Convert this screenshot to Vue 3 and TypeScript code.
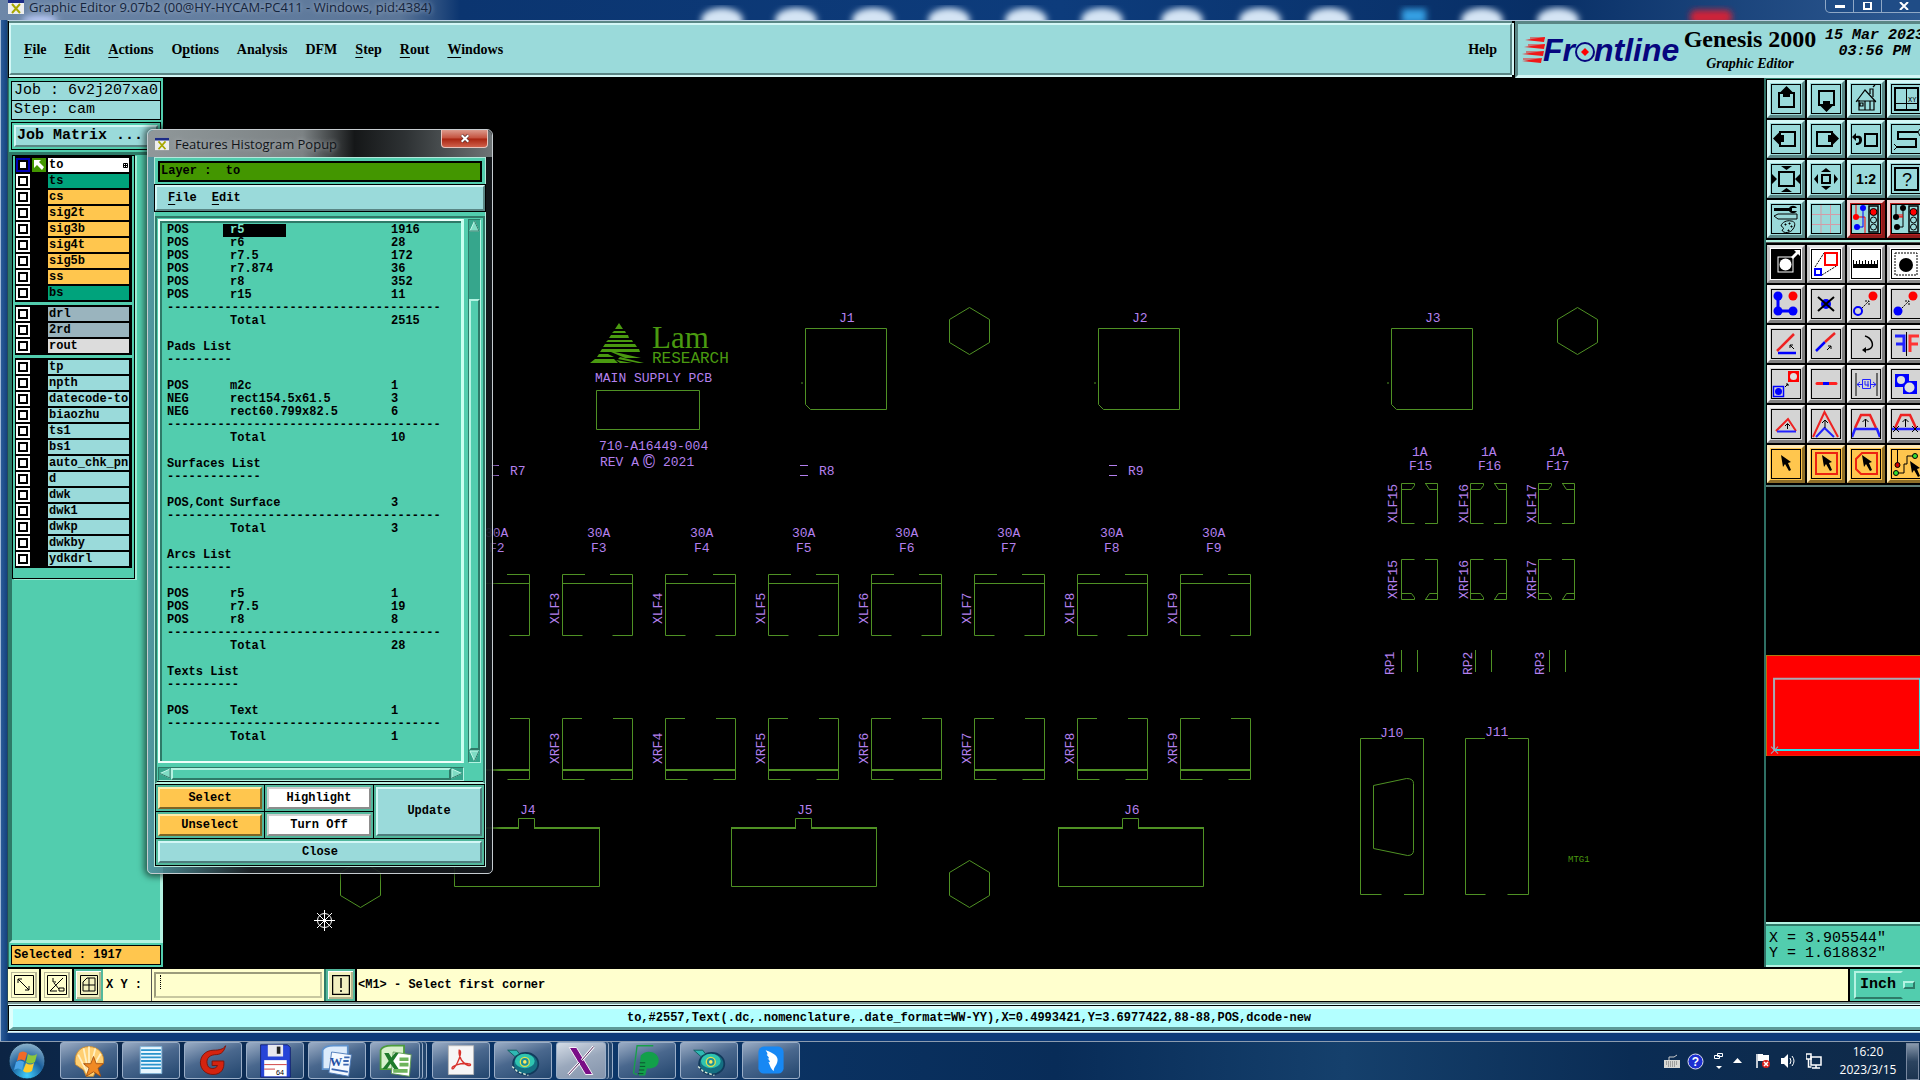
<script setup lang="ts">
import { ref } from 'vue'

interface MenuEntry { pre: string; key: string; post: string }
interface Layer { name: string; tone: string; active?: boolean }
interface Tool { label: string; tone: string; art: string }
interface Row { kind: 'data' | 'rule' | 'title' | 'blank'; a?: string; b?: string; c?: string; picked?: boolean }

const menus: MenuEntry[] = [
  { pre: '', key: 'F', post: 'ile' },
  { pre: '', key: 'E', post: 'dit' },
  { pre: '', key: 'A', post: 'ctions' },
  { pre: 'O', key: 'p', post: 'tions' },
  { pre: 'Analysis', key: '', post: '' },
  { pre: 'DFM', key: '', post: '' },
  { pre: '', key: 'S', post: 'tep' },
  { pre: '', key: 'R', post: 'out' },
  { pre: '', key: 'W', post: 'indows' },
]

const layerGroups: Layer[][] = [
  [
    { name: 'to', tone: 'white', active: true },
    { name: 'ts', tone: 'green' },
    { name: 'cs', tone: 'orange' },
    { name: 'sig2t', tone: 'orange' },
    { name: 'sig3b', tone: 'orange' },
    { name: 'sig4t', tone: 'orange' },
    { name: 'sig5b', tone: 'orange' },
    { name: 'ss', tone: 'orange' },
    { name: 'bs', tone: 'green' },
  ],
  [
    { name: 'drl', tone: 'slate' },
    { name: '2rd', tone: 'slate' },
    { name: 'rout', tone: 'silver' },
  ],
  ['tp', 'npth', 'datecode-to', 'biaozhu', 'ts1', 'bs1', 'auto_chk_pnl', 'd', 'dwk', 'dwk1', 'dwkp', 'dwkby', 'ydkdrl']
    .map((name) => ({ name, tone: 'aqua' })),
]

const d = (a: string, b: string, c: string, picked = false): Row => ({ kind: 'data', a, b, c, picked })
const rule = (n = 38): Row => ({ kind: 'rule', a: '-'.repeat(n) })
const title = (a: string): Row => ({ kind: 'title', a })
const blank: Row = { kind: 'blank' }

const rows: Row[] = [
  d('POS', 'r5', '1916', true), d('POS', 'r6', '28'), d('POS', 'r7.5', '172'), d('POS', 'r7.874', '36'),
  d('POS', 'r8', '352'), d('POS', 'r15', '11'), rule(), d('', 'Total', '2515'), blank,
  title('Pads List'), rule(9), blank,
  d('POS', 'm2c', '1'), d('NEG', 'rect154.5x61.5', '3'), d('NEG', 'rect60.799x82.5', '6'), rule(), d('', 'Total', '10'), blank,
  title('Surfaces List'), rule(13), blank,
  d('POS,Cont', 'Surface', '3'), rule(), d('', 'Total', '3'), blank,
  title('Arcs List'), rule(9), blank,
  d('POS', 'r5', '1'), d('POS', 'r7.5', '19'), d('POS', 'r8', '8'), rule(), d('', 'Total', '28'), blank,
  title('Texts List'), rule(10), blank,
  d('POS', 'Text', '1'), rule(), d('', 'Total', '1'),
]

const sq = (x: number, y: number, w: number, h: number, extra = '') =>
  `<rect x="${x}" y="${y}" width="${w}" height="${h}" fill="none" stroke="#000" stroke-width="2" ${extra}/>`
const arrow = (x: number, y: number) =>
  `<path d="M${x} ${y}l7 -7m-4 0h4v4" fill="none" stroke="#000" stroke-dasharray="2 1"/>`
const up = (x: number, y: number) =>
  `<path d="M${x} ${y + 8}v-8M${x - 3} ${y + 3}l3 -3l3 3" fill="none" stroke="#000"/>`
const cursor = (x: number, y: number) =>
  `<path transform="translate(${x} ${y})" d="M0 0L10 7L7 8L10 15L8 16L4 9L2 12Z"/>`
const lamp = '<rect x="18" y="2" width="9" height="26" fill="none" stroke="#000" stroke-width="1.5"/><circle cx="22.5" cy="8" r="3.5" fill="#f00" stroke="#000"/><circle cx="22.5" cy="16" r="3" fill="none" stroke="#000"/><circle cx="22.5" cy="23" r="3" fill="none" stroke="#000"/>'

const viewTools: Tool[] = [
  { label: 'Pan up', tone: 'aqua', art: sq(8, 9, 15, 14) + '<path d="M15.500 2l6 6h-2.500v5h-7v-5h-2.500z"/>' },
  { label: 'Pan down', tone: 'aqua', art: sq(8, 7, 15, 14) + '<path d="M15.500 28l6 -6h-2.500v-5h-7v5h-2.500z"/>' },
  { label: 'Home', tone: 'aqua', art: '<path d="M5 18L14 6L25 18M8 16v10h15v-10M5 17h20M14 26v-9h5v9M9 19h3v3h-3zM19 10v-5h3v8M22 3l2 -2" fill="none" stroke="#000" stroke-width="1.200"/>' },
  { label: 'Zoom XY', tone: 'aqua', art: sq(4, 4, 23, 22) + '<path d="M15.500 4v22M4 19.500h23" stroke="#000"/><text x="17" y="18" font-size="7" font-family="Liberation Mono, monospace">XY</text>' },
  { label: 'Pan left', tone: 'aqua', art: sq(9, 8, 15, 14) + '<path d="M2 14.500l6 -6v2.500h5v7h-5v2.500z"/>' },
  { label: 'Pan right', tone: 'aqua', art: sq(6, 8, 15, 14) + '<path d="M28 14.500l-6 -6v2.500h-5v7h5v2.500z"/>' },
  { label: 'Previous view', tone: 'aqua', art: sq(14, 10, 12, 12) + '<path d="M5 12c5 -1 6 1 6 4s-2 5 -6 5v-2c3 0 3 -1 3 -3s-1 -2 -3 -2v3l-4 -4l4 -4z"/>' },
  { label: 'Snake path', tone: 'aqua', art: '<path d="M27 8H7v7h18v8H6" fill="none" stroke="#000" stroke-width="2"/><path d="M27 8l2 -3M27 8l2 4M6 23l-3 -3M6 23l-3 3" stroke="#000"/>' },
  { label: 'Zoom in', tone: 'aqua', art: sq(8, 8, 15, 14) + '<path d="M10 2h11l-5.500 4zM10 28h11l-5.500 -4zM1 10v10l5 -5zM29 10v10l-5 -5z"/>' },
  { label: 'Zoom out', tone: 'aqua', art: sq(11, 11, 8, 8) + '<path d="M10 8h10l-5 -4zM10 22h10l-5 4zM7 10v10l-4 -5zM23 10v10l4 -5z"/>' },
  { label: 'Zoom 1:2', tone: 'aqua', art: '<text x="15" y="20" text-anchor="middle" font-size="14" font-weight="bold" font-family="Liberation Sans, sans-serif">1:2</text>' },
  { label: 'Query', tone: 'aqua', art: sq(4, 4, 23, 22) + '<text x="16" y="22" text-anchor="middle" font-size="18" font-family="Liberation Sans, sans-serif">?</text>' },
  { label: 'Display options', tone: 'aqua', art: '<path d="M3 4h15c2 -3 6 -3 8 0h-5v3h5c-2 3 -6 3 -8 0h-15z"/><path d="M3 12l4 -2h19v5h-19zM10 22c1 -4 6 -6 10 -5c4 0 5 4 2 8c-2 4 -10 5 -11 1c3 -1 1 -3 -1 -4z" fill="none" stroke="#000"/><path d="M14 20h1v1h-1zM18 19h1v1h-1zM20 22h1v1h-1zM17 26h1v1h-1z" stroke="#000"/>' },
  { label: 'Grid', tone: 'aqua', art: '<path d="M10 1v28M19.500 1v28M1 10.500h28M1 20.500h28" stroke="#d49ba6"/>' },
  { label: 'Net compare', tone: 'red', art: '<path d="M5 1v12h9v16" fill="none" stroke="#f00" /><circle cx="5" cy="13" r="3" fill="#f00"/><path d="M12 4v19h-5" fill="none" stroke="#00f"/><circle cx="12" cy="4" r="3" fill="#00f"/><circle cx="6" cy="23" r="3" fill="#00f"/>' + lamp },
  { label: 'Net check', tone: 'red', art: '<path d="M5 1v12M12 4v19h-5" fill="none" stroke="#000"/><path d="M6 13h6M7 10v3M9 10v3M11 10v3" stroke="#f00"/><circle cx="5" cy="13" r="3"/><circle cx="12" cy="4" r="3"/><circle cx="6" cy="23" r="3"/>' + lamp },
]

const editTools: Tool[] = [
  { label: 'Select inside', tone: 'white', art: '<path d="M1 1h28v28H1z"/><rect x="7" y="8" width="15" height="15" fill="none" stroke="#fff"/><circle cx="14.500" cy="15.500" r="6" fill="#fff"/><path d="M20 8l5 -5l-2 -2h6v6l-2 -2l-5 5z" fill="#fff"/>' },
  { label: 'Resize', tone: 'white', art: '<path d="M4 18L13 4M11 26L27 16" stroke="#000" stroke-dasharray="2 1"/><rect x="14" y="4" width="12" height="12" fill="none" stroke="#f00" stroke-width="2"/><rect x="4" y="20" width="6" height="6" fill="none" stroke="#00f" stroke-width="2"/>' },
  { label: 'Measure', tone: 'white', art: '<path d="M2 19v-8h1v4h2v-3h1v3h2v-4h1v4h2v-3h1v3h2v-4h1v4h2v-3h1v3h2v-4h1v4h2v-3h1v3h2v-4h1v8z"/>' },
  { label: 'Select pad', tone: 'white', art: '<rect x="4" y="4" width="22" height="22" fill="none" stroke="#000" stroke-dasharray="2 1"/><circle cx="15" cy="16" r="7"/>' },
  { label: 'Copy', tone: 'gray', art: '<path d="M7 7v15h15" fill="none" stroke="#00f" stroke-width="3"/><circle cx="7" cy="7" r="4.500" fill="#00f"/><circle cx="7" cy="22" r="4.500" fill="#00f"/><circle cx="22" cy="22" r="4.500" fill="#00f"/><circle cx="22" cy="7" r="4.500" fill="#f00"/>' },
  { label: 'Delete', tone: 'gray', art: '<circle cx="15" cy="15" r="5" fill="#00f"/><path d="M7 8L23 22M23 8L7 22" stroke="#000" stroke-width="2"/>' },
  { label: 'Move', tone: 'gray', art: '<circle cx="7" cy="22" r="4" fill="none" stroke="#00f" stroke-width="2"/><circle cx="22" cy="7" r="4.500" fill="#f00"/>' + arrow(11, 19) },
  { label: 'Duplicate', tone: 'gray', art: '<circle cx="7" cy="22" r="4.500" fill="#00f"/><circle cx="22" cy="7" r="4.500" fill="#f00"/>' + arrow(11, 19) },
  { label: 'Rotate', tone: 'gray', art: '<path d="M6 22L23 5" stroke="#e22" stroke-width="2.500"/><path d="M7 24h18" stroke="#00f" stroke-width="2.500"/><path d="M23 20l-4 -4m0 3v-3h3" fill="none" stroke="#000"/>' },
  { label: 'Extend line', tone: 'gray', art: '<path d="M5 22L14 13" stroke="#00f" stroke-width="2.500"/><path d="M14 13L24 4" stroke="#e22" stroke-width="2.500"/><path d="M16 21l4 -4m-3 0h3v3" fill="none" stroke="#000"/>' },
  { label: 'Undo', tone: 'gray', art: '<path d="M14 7c7 2 9 9 6 12c-2 2 -4 2 -7 2" fill="none" stroke="#000" stroke-width="1.500"/><path d="M11 21l4 -3v6z"/>' },
  { label: 'Mirror', tone: 'gray', art: '<path d="M4 7h9v16M5 15h8" fill="none" stroke="#22f" stroke-width="3"/><path d="M15.500 3v24" stroke="#000"/><path d="M28 7h-9v16M27 15h-8" fill="none" stroke="#f33" stroke-width="3"/>' },
  { label: 'Change symbol', tone: 'gray', art: '<rect x="17" y="2" width="11" height="11" fill="#f00"/><circle cx="22.500" cy="7.500" r="3.500" fill="#ddd"/><rect x="2.500" y="17.500" width="10" height="10" fill="none" stroke="#00f" stroke-width="1.500"/><circle cx="7.500" cy="22.500" r="3.500" fill="#00f"/><path d="M14 18l3 -3m-2 0h2v2" fill="none" stroke="#000"/>' },
  { label: 'Break line', tone: 'gray', art: '<path d="M6 14.500h19" stroke="#f22" stroke-width="3" stroke-linecap="round"/><path d="M12 14.500h6" stroke="#00f" stroke-width="3"/>' },
  { label: 'Stretch', tone: 'gray', art: '<path d="M5 4v23M26 4v23" stroke="#000"/><path d="M6 15.500h5M6 15.500l3 -2.500M6 15.500l3 2.500M25 15.500h-5M25 15.500l-3 -2.500M25 15.500l-3 2.500M11.500 10.500h8v9h-8zM14 12v4h4M17 12v6" fill="none" stroke="#22f"/>' },
  { label: 'Merge', tone: 'gray', art: '<path d="M4 5h14v7h8v13H12v-7H4z" fill="#00f"/><circle cx="10" cy="11" r="4" fill="#ddd"/><circle cx="18.500" cy="18.500" r="5" fill="#ddd"/>' },
  { label: 'Corner', tone: 'gray', art: '<path d="M5 22L17 10L25 22" fill="none" stroke="#e22" stroke-width="2"/><path d="M6 22.500h19" stroke="#22f" stroke-width="2"/><path d="M16.500 20v-5M14 17l2.500 -2.500l2.500 2.500" fill="none" stroke="#000"/>' },
  { label: 'Peak', tone: 'gray', art: '<path d="M2 28L13.500 3L27 28" fill="none" stroke="#e22" stroke-width="2"/><path d="M5 28L13.500 19L23 28" fill="none" stroke="#22f" stroke-width="2"/>' + up(14, 11) },
  { label: 'Raise segment', tone: 'gray', art: '<path d="M4 19L10 6h9l6 13" fill="none" stroke="#e22" stroke-width="2.500"/><path d="M1 28L4 20h22l3 8" fill="none" stroke="#22f" stroke-width="2.500"/>' + up(14.5, 10) },
  { label: 'Cut segment', tone: 'gray', art: '<path d="M4 19L10 6h9l6 13" fill="none" stroke="#e22" stroke-width="2.500"/><path d="M1 20h28" stroke="#22f" stroke-width="2.500"/><path d="M2 17l6 6M8 17l-6 6M21 17l6 6M27 17l-6 6" stroke="#000"/>' + up(14.5, 10) },
  { label: 'Pick feature', tone: 'orange', art: cursor(10, 6) },
  { label: 'Pick by window', tone: 'orange', art: '<rect x="5" y="4" width="21" height="21" fill="none" stroke="#e21" stroke-width="2"/>' + cursor(11, 6) },
  { label: 'Pick by polygon', tone: 'orange', art: '<path d="M11 4h15v21H10l-5 -5v-10z" fill="none" stroke="#e21" stroke-width="2"/>' + cursor(11, 6) },
  { label: 'Pick net', tone: 'orange', art: '<path d="M6.500 1v15M5 24h8v-9h3v-8h8" fill="none" stroke="#000"/><circle cx="6.500" cy="16" r="2.500" fill="#c00" stroke="#000"/><circle cx="5" cy="24" r="2.500" fill="#3d3" stroke="#000"/><circle cx="24" cy="7" r="2.500" fill="#3d3" stroke="#000"/>' + cursor(19, 12) },
]

const blobs = [722, 796, 873, 949, 1026, 1102, 1182, 1260, 1329, 1482, 1558]

const fuses = [2, 3, 4, 5, 6, 7, 8, 9].map((n) => ({
  n,
  x: 562 + (n - 3) * 103,
  tx: Math.round(587 + (n - 3) * 102.5),
}))
const smallFuses = [
  { n: 15, x: 1401, lx: 1397 },
  { n: 16, x: 1470, lx: 1468 },
  { n: 17, x: 1538, lx: 1536 },
]
const sockets = [{ n: 1, x: 805 }, { n: 2, x: 1098 }, { n: 3, x: 1391 }]
const headers = [{ n: 4, x: 454 }, { n: 5, x: 731 }, { n: 6, x: 1058 }]
const hexes = [{ x: 969, y: 331 }, { x: 1577, y: 331 }, { x: 969, y: 884 }, { x: 360, y: 884 }]
const resistors = [{ n: 7, x: 491 }, { n: 8, x: 800 }, { n: 9, x: 1109 }]
const packs = [{ n: 1, x: 1401, lx: 1394 }, { n: 2, x: 1475, lx: 1472 }, { n: 3, x: 1549, lx: 1544 }]

const shell = '<path d="M20 4C8 4 3 14 5 24l9 6l3 7h8l3 -8l8 -6C38 12 30 4 20 4z" fill="#ffcf72" stroke="#c98a2e"/><path d="M18 33L8 13M19 31L14 6M20 31V4M21 31L27 6M22 31L33 12" stroke="#fff0c4" stroke-width="2"/><path d="M25 15l3 8l8 0l-6 5l3 9l-8 -5l-8 5l3 -9l-6 -5l8 0z" fill="#f08a24" stroke="#a4500e"/>'
const page = '<path d="M8 4h24v30H8z" fill="#e8f7ff" stroke="#7fb4d8"/><path d="M9 8h22M9 12h22M9 16h22M9 20h22M9 24h22M9 28h22" stroke="#2a94cc" stroke-width="2"/>'
const gee = '<path d="M34 3c-2 4 -8 5 -13 5C11 8 6 15 6 22s6 13 14 13c9 0 13 -6 12 -15H19v5h6c-1 4 -9 5 -11 0c-2 -6 0 -11 8 -12c6 0 10 -2 12 -10z" fill="#d5230f" stroke="#7d1208"/>'
const floppy = '<path d="M4 2h30l3 3v33H4z" fill="#2745d8" stroke="#12206e"/><path d="M12 2h17v13H12z" fill="#e8e8ee"/><path d="M22 4h4v8h-4z" fill="#222"/><path d="M8 19h25v18H8z" fill="#fff"/><path d="M8 24h25M8 29h12" stroke="#c33" /><text x="21" y="35" font-size="8" font-family="Liberation Sans, sans-serif">64</text>'
const word = '<path d="M4 8C6 4 12 3 16 3h16v26H4z" fill="#dcebfb" stroke="#5f92cc" stroke-width="2"/><path d="M14 10l22 3l-3 24l-22 -4z" fill="#f4f9ff" stroke="#4a78b8"/><path d="M28 16h6M27 20h6M27 24h6M14 29l18 3" stroke="#3a66b0" stroke-width="2"/><text x="12" y="25" font-size="14" font-weight="bold" fill="#2450a4" font-family="Liberation Serif, serif">W</text>'
const excel = '<path d="M4 8C6 4 12 3 16 3h14v26H4z" fill="#d7f0cc" stroke="#4c9c3c" stroke-width="2"/><path d="M18 10l20 3l-2 24l-20 -3z" fill="#fff" stroke="#5a9a4e"/><path d="M25 16h10v4h-10zM25 22h10v4h-10zM18 29h16v4h-16z" fill="#6db45c"/><path d="M8 11h5l3 5l4 -5h4l-6 9l6 9h-5l-4 -6l-4 6H6l7 -9z" fill="#1f7a2c"/>'
const pdf = '<path d="M6 3h28v32H6z" fill="#f6f6f6" stroke="#b8b8b8"/><path d="M18 8c3 0 1 8 -2 14s-6 8 -6 6s8 -6 18 -5c4 0 3 3 0 2c-6 -2 -11 -9 -10 -17z" fill="none" stroke="#d8322c" stroke-width="1.500"/>'
const gerber = '<ellipse cx="23" cy="23" rx="14" ry="12" fill="#156f82" stroke="#123b5c" stroke-width="2"/><ellipse cx="22" cy="20" rx="11" ry="8" fill="#2fc4b0"/><circle cx="22" cy="21" r="5" fill="#1a8f9c" stroke="#e4e04a" stroke-width="1.500"/><circle cx="22" cy="21" r="2" fill="#ffe960"/><path d="M3 8h10l3 4l-5 3z" fill="#2fb8b4" stroke="#0f5a5c"/><path d="M8 26l6 6l12 4" fill="none" stroke="#ded" stroke-width="1.500" stroke-dasharray="3 2"/>'
const xwin = '<path d="M7 5h8l18 30h-8z" fill="#7a0e86" stroke="#fff" stroke-width="1"/><path d="M34 4L21 19M18 22L6 35" stroke="#fff" stroke-width="3"/><path d="M34 4L21 19M18 22L6 35" stroke="#3c0b46" stroke-width="1"/>'
const pee = '<path d="M5 34L9 3h18M6 34l3 1" fill="none" stroke="#18a04a" stroke-width="1.500"/><path d="M13 14c6 -8 20 -4 20 5c0 8 -7 10 -13 9l-2 8h-7z" fill="#12a04a"/><path d="M12 22h6M12 26h6M11 30h6M10 34h6" stroke="#0b4a2c"/>'
const bird = '<rect x="6" y="4" width="28" height="30" rx="6" fill="#1788f4"/><path d="M14 8c9 3 15 7 13 13c-1 4 -4 6 -4 10c-4 -3 -4 -7 -6 -10c3 1 2 -1 -1 -4c3 1 2 -1 -1 -4c2 0 1 -2 -1 -5z" fill="#fff"/>'

const apps = [
  { label: 'Shell viewer', art: shell },
  { label: 'Notepad', art: page },
  { label: 'Gee', art: gee },
  { label: 'Floppy commander', art: floppy },
  { label: 'Word', art: word },
  { label: 'Excel', art: excel, stacked: true },
  { label: 'PDF reader', art: pdf },
  { label: 'CAM viewer', art: gerber },
  { label: 'X server', art: xwin, stacked: true, active: true },
  { label: 'Planner', art: pee },
  { label: 'CAM editor', art: gerber },
  { label: 'Messenger', art: bird },
]

const coords = ref('')
const unit = ref('Inch')
</script>

<template>
  <div class="desktop">
    <div class="window">
      <header class="titlebar">
        <svg class="glow" width="100%" height="20" aria-hidden="true">
          <defs><filter id="soft"><feGaussianBlur stdDeviation="3" /></filter></defs>
          <g filter="url(#soft)">
            <ellipse v-for="x in blobs" :key="x" :cx="x" cy="20" rx="21" ry="12" fill="#d4e4f4" />
            <ellipse cx="40" cy="20" rx="18" ry="5" fill="#b8c8f4" />
            <rect x="1402" y="9" width="24" height="14" fill="#35a0e4" />
            <rect x="1690" y="10" width="42" height="14" rx="6" fill="#d02238" />
          </g>
        </svg>
        <svg class="xico" width="16" height="14" viewBox="0 0 16 14" aria-hidden="true">
          <path d="M0 0h16v14H0z" fill="#eee" /><path d="M0 0h16v3H0z" fill="#1c2c86" />
          <path d="M4 4l8 9M12 4l-8 9" stroke="#a8a800" stroke-width="2" />
        </svg>
        <span class="caption">Graphic Editor 9.07b2 (00@HY-HYCAM-PC411 - Windows, pid:4384)</span>
        <div class="winbtns">
          <button type="button" aria-label="Minimize"><i class="min"></i></button>
          <button type="button" aria-label="Maximize"><i class="max"></i></button>
          <button type="button" aria-label="Close window">
            <svg width="10" height="8" viewBox="0 0 10 8"><path d="M1 0l8 8M9 0l-8 8" stroke="#fff" stroke-width="2" /></svg>
          </button>
        </div>
      </header>

      <div class="body">
        <div class="top">
          <nav class="menubar">
            <button v-for="(m, i) in menus" :key="i" type="button">{{ m.pre }}<u v-if="m.key">{{ m.key }}</u>{{ m.post }}</button>
            <button type="button" class="help">Help</button>
          </nav>
          <div class="brand">
            <svg width="160" height="36" viewBox="0 0 160 36" role="img" aria-label="Frontline">
              <path d="M3 8l20 -3l-1 5zM2 15l21 -3l-1 5zM0 22l22 -3l-1 5zM0 29l20 -3l-1 5z" fill="#f01818" />
              <path d="M8 6h15M6 13h17M4 20h17M1 27h17" stroke="#f01818" stroke-width="1" />
              <g fill="#06067e" font-family="Liberation Sans, sans-serif" font-size="32" font-weight="bold" font-style="italic">
                <text x="21" y="29">Fr</text>
                <text x="72" y="29">ntline</text>
              </g>
              <circle cx="63" cy="20" r="9" fill="#9adada" stroke="#06067e" stroke-width="2" />
              <path d="M63 16l4 4l-4 4l-4 -4z" fill="#f00" />
            </svg>
            <div class="product"><b>Genesis 2000</b><em>Graphic Editor</em></div>
            <div class="clock">15 Mar 2023<br />03:56 PM</div>
          </div>
        </div>

        <main class="work">
          <aside class="side">
            <div class="jobinfo">
              <div>Job : 6v2j207xa0</div>
              <div>Step: cam</div>
            </div>
            <div class="matrixbox"><button type="button">Job Matrix ...</button></div>
            <div class="layers">
              <div class="layerframe">
                <ul v-for="(g, gi) in layerGroups" :key="gi">
                  <li v-for="l in g" :key="l.name">
                    <input :id="'ly-' + l.name" type="checkbox" :class="{ on: l.active }" />
                    <svg v-if="l.active" class="mark" width="14" height="14" viewBox="0 0 14 14" aria-hidden="true">
                      <path d="M0 0h14v14H0z" fill="#439600" /><path d="M2 2h7l-2 2l5 5l-2 3l-5 -5l-3 3z" fill="#fff" />
                    </svg>
                    <label :for="'ly-' + l.name" :class="l.tone">
                      {{ l.name }}
                      <svg v-if="l.active" width="5" height="5" viewBox="0 0 5 5" aria-hidden="true"><path d="M.5 .5h4v4h-4zM2.500 0v5M0 2.500h5" fill="none" stroke="#000" /></svg>
                    </label>
                  </li>
                </ul>
              </div>
            </div>
            <div class="selected"><div>Selected : 1917</div></div>
          </aside>

          <div class="canvas">
            <svg width="100%" height="100%" aria-label="Board silkscreen">
              <g transform="translate(-163 -78)">
                <g class="ln">
                  <path v-for="h in hexes" :key="h.x + '-' + h.y" :d="`M${h.x + .5} ${h.y - 23.5}l20 12v23l-20 12l-20 -12v-23z`" />
                  <path v-for="s in sockets" :key="s.n" :d="`M${s.x + .5} 328.500h81v81h-76l-5 -5zM${s.x - 4} 383h2`" />
                  <path d="M596.500 390.500h103v39h-103z" />
                  <path
                    v-for="f in fuses" :key="f.n"
                    :d="`M${f.x + 23} 574.500h-22.500v61h20M${f.x + 48} 574.500h22.500v61h-20M${f.x} 583.500h70
                         M${f.x + 20} 718.500h-19.500v61h22M${f.x + 51} 718.500h19.500v61h-22`"
                  />
                  <path v-for="f in fuses" :key="'t' + f.n" class="bold" :d="`M${f.x} 770h71`" />
                  <path
                    v-for="j in headers" :key="j.n"
                    :d="`M${j.x + .5} 828v58.500h145v-58.500M${j.x + 64.5} 828v-9.500h16v9.500`"
                  />
                  <path v-for="j in headers" :key="'t' + j.n" class="bold" :d="`M${j.x} 828h65M${j.x + 80} 828h66`" />
                  <path
                    v-for="s in smallFuses" :key="s.n"
                    :d="`M${s.x + 13.5} 483.500h-13v40h13M${s.x + 24} 483.500h12.500v40h-12.500
                         M${s.x + .5} 489.500h10l3 -4v-2M${s.x + 36.5} 489.500h-8l-4 -6
                         M${s.x + 13.5} 559.500h-13v40h13M${s.x + 24} 559.500h12.500v40h-12.500
                         M${s.x + .5} 593.500h10l3 4v2M${s.x + 36.5} 593.500h-8l-4 6`"
                  />
                  <path v-for="p in packs" :key="p.n" :d="`M${p.x + .5} 650v22M${p.x + 16.5} 650v22`" />
                  <path d="M1382 738.500h-21.500v156h21M1404 738.500h19.500v156h-19.500M1485 738.500h-19.500v156h20M1508 738.500h20.500v156h-21" />
                  <path d="M1373.500 785.500l33 -7q7 0 7 5v67q0 5 -6 5l-34 -7z" />
                </g>
                <g class="logo">
                  <path d="M619 323l4 6h-8zM614 331h11l1 2h-14zM611 335h17l1 3h-20zM608 340h24l1 2h-27zM605 344h30l2 3h-34zM602 349h37l1 3h-40zM599 354h9l6 3h-17zM611 352h4l26 6h-16zM595 359h19l4 4h-28zM620 357l24 6h-6l-20 -4zM616 360l16 3h-12z" />
                  <text x="652" y="348" class="lam">Lam</text>
                  <text x="652" y="363" class="res">RESEARCH</text>
                  <text x="1568" y="862" class="mtg">MTG1</text>
                </g>
                <g class="pt">
                  <text x="595" y="382">MAIN SUPPLY PCB</text>
                  <text x="599" y="450">710-A16449-004</text>
                  <text x="600" y="466">REV A</text>
                  <text x="643" y="468" class="copy">©</text>
                  <text x="663" y="466">2021</text>
                  <text v-for="s in sockets" :key="s.n" :x="s.x + 34" y="322">J{{ s.n }}</text>
                  <template v-for="f in fuses" :key="f.n">
                    <text :x="f.tx" y="537">30A</text>
                    <text :x="f.tx + 4" y="552">F{{ f.n }}</text>
                    <text :transform="`translate(${f.x - 3} 624) rotate(-90)`">XLF{{ f.n }}</text>
                    <text :transform="`translate(${f.x - 3} 764) rotate(-90)`">XRF{{ f.n }}</text>
                  </template>
                  <template v-for="s in smallFuses" :key="s.n">
                    <text :x="s.x + 11" y="456">1A</text>
                    <text :x="s.x + 8" y="470">F{{ s.n }}</text>
                    <text :transform="`translate(${s.lx} 523) rotate(-90)`">XLF{{ s.n }}</text>
                    <text :transform="`translate(${s.lx} 599) rotate(-90)`">XRF{{ s.n }}</text>
                  </template>
                  <text v-for="p in packs" :key="p.n" :transform="`translate(${p.lx} 675) rotate(-90)`">RP{{ p.n }}</text>
                  <template v-for="r in resistors" :key="r.n">
                    <path :d="`M${r.x} 465.500h8M${r.x} 475.500h8`" />
                    <text :x="r.x + 19" y="475">R{{ r.n }}</text>
                  </template>
                  <text v-for="j in headers" :key="j.n" :x="j.x + 66" y="814">J{{ j.n }}</text>
                  <text x="1380" y="737">J10</text>
                  <text x="1485" y="736">J11</text>
                </g>
                <g class="cross">
                  <circle cx="324.500" cy="920.500" r="7" />
                  <path d="M314 920.500h21M324.500 910v21M317 913l15 15M332 913l-15 15" />
                </g>
              </g>
            </svg>
          </div>

          <aside class="tools">
            <div class="grid">
              <button v-for="t in viewTools" :key="t.label" type="button" :class="t.tone" :aria-label="t.label">
                <svg width="30" height="30" viewBox="0 0 30 30" v-html="t.art"></svg>
              </button>
            </div>
            <div class="grid edit">
              <button v-for="t in editTools" :key="t.label" type="button" :class="t.tone" :aria-label="t.label">
                <svg width="30" height="30" viewBox="0 0 30 30" v-html="t.art"></svg>
              </button>
            </div>
            <div class="overview">
              <svg width="100%" height="101" viewBox="0 0 160 101" preserveAspectRatio="xMinYMin slice" aria-label="Board overview">
                <path d="M.5 .5h170v100h-170z" fill="#f00" stroke="#b07a10" />
                <path d="M8 95V23.500h145" fill="none" stroke="#a9a9b4" stroke-width="2" />
                <path d="M8 94.500h145V23" fill="none" stroke="#2ee0e8" stroke-width="2" />
                <path d="M5 91l7 7M12 91l-7 7" stroke="#9ab" />
              </svg>
            </div>
            <div class="xy">X = 3.905544"<br />Y = 1.618832"</div>
          </aside>
        </main>

        <div class="command">
          <button type="button" class="cb" aria-label="Snap diagonal">
            <svg width="20" height="20" viewBox="0 0 20 20"><path d="M.5 .5h19v19H.5zM4 4l11 11M4 8V4h4M15 11v4h-4" fill="none" stroke="#000" /></svg>
          </button>
          <button type="button" class="cb" aria-label="Snap angle">
            <svg width="20" height="20" viewBox="0 0 20 20"><path d="M.5 .5h19v19H.5zM3 16L16 3M3 16h7M7 8l5 6M6 3v4h3M12 13h5v3h-5z" fill="none" stroke="#000" /></svg>
          </button>
          <button type="button" class="cb lit" aria-label="Snap grid">
            <svg width="18" height="20" viewBox="0 0 18 20"><path d="M.5 .5h17v19H.5zM3 7l4 -4h8v13H3zM9 3v13M3 10h12" fill="none" stroke="#000" /></svg>
          </button>
          <label for="xy">X Y :</label>
          <div class="field"><input id="xy" v-model="coords" type="text" /><i></i></div>
          <button type="button" class="cb lit" aria-label="Alert">
            <svg width="18" height="20" viewBox="0 0 18 20"><path d="M.5 .5h17v19H.5zM9 3v10M9 15v2" fill="none" stroke="#000" stroke-width="1.500" /></svg>
          </button>
          <div class="prompt">&lt;M1&gt; - Select first corner</div>
          <div class="unit">
            <select v-model="unit" aria-label="Unit"><option>Inch</option></select>
            <i></i>
          </div>
        </div>
        <div class="statusframe">
          <div class="status">to,#2557,Text(.dc,.nomenclature,.date_format=WW-YY),X=0.4993421,Y=3.6977422,88-88,POS,dcode-new</div>
        </div>
      </div>

      <section class="popup" aria-label="Features Histogram Popup">
        <header>
          <svg width="14" height="14" viewBox="0 0 16 14" aria-hidden="true">
            <path d="M0 0h16v14H0z" fill="#eee" /><path d="M0 0h16v3H0z" fill="#1c2c86" />
            <path d="M4 4l8 9M12 4l-8 9" stroke="#a8a800" stroke-width="2" />
          </svg>
          <span>Features Histogram Popup</span>
          <button type="button" aria-label="Close popup"><svg width="10" height="9" viewBox="0 0 12 10"><path d="M2 1l8 8M10 1l-8 8" stroke="#4a2020" stroke-width="4" /><path d="M2 1l8 8M10 1l-8 8" stroke="#fff" stroke-width="2.500" /></svg></button>
        </header>
        <div class="inner">
          <div class="layerline"><div>Layer :&nbsp; to</div></div>
          <nav><button type="button"><u>F</u>ile</button><button type="button"><u>E</u>dit</button></nav>
          <div class="scroller">
            <div class="listing">
              <table>
                <colgroup><col class="c1" /><col class="c2" /><col /></colgroup>
                <tbody>
                  <tr v-for="(r, i) in rows" :key="i">
                    <template v-if="r.kind === 'data'">
                      <td>{{ r.a }}</td>
                      <td><span :class="{ picked: r.picked }">{{ r.b }}</span></td>
                      <td>{{ r.c }}</td>
                    </template>
                    <td v-else colspan="3">{{ r.a }}</td>
                  </tr>
                </tbody>
              </table>
            </div>
            <div class="vbar">
              <svg width="11" height="12" viewBox="0 0 11 12"><path d="M5.500 1L1 11h9z" fill="#7fdcc4" stroke="#c4f8ea" /><path d="M5.500 1L10 11H1" fill="none" stroke="#2e7a68" /></svg>
              <i></i>
              <svg width="11" height="12" viewBox="0 0 11 12"><path d="M5.500 11L1 1h9z" fill="#7fdcc4" stroke="#c4f8ea" /><path d="M5.500 11L10 1" fill="none" stroke="#2e7a68" /></svg>
            </div>
            <div class="hbar">
              <svg width="12" height="11" viewBox="0 0 12 11"><path d="M1 5.500L11 1v9z" fill="#7fdcc4" stroke="#c4f8ea" /><path d="M1 5.500L11 10V1" fill="none" stroke="#2e7a68" /></svg>
              <i></i>
              <svg width="12" height="11" viewBox="0 0 12 11"><path d="M11 5.500L1 1v9z" fill="#7fdcc4" stroke="#c4f8ea" /><path d="M11 5.500L1 10" fill="none" stroke="#2e7a68" /></svg>
            </div>
          </div>
          <div class="actions">
            <div><button type="button" class="gold">Select</button></div>
            <div><button type="button" class="plain">Highlight</button></div>
            <div class="tall"><button type="button">Update</button></div>
            <div><button type="button" class="gold">Unselect</button></div>
            <div><button type="button" class="plain">Turn Off</button></div>
            <div class="wide"><button type="button">Close</button></div>
          </div>
        </div>
      </section>
    </div>

    <footer class="taskbar">
      <button type="button" class="start" aria-label="Start">
        <svg width="38" height="38" viewBox="0 0 38 38">
          <defs>
            <radialGradient id="orb" cx="50%" cy="90%" r="90%"><stop offset="0" stop-color="#3fd0ff" /><stop offset=".5" stop-color="#1b5f9c" /><stop offset="1" stop-color="#8fb4cc" /></radialGradient>
          </defs>
          <circle cx="19" cy="19" r="18" fill="url(#orb)" stroke="#0a2440" />
          <path d="M11 11q4 -3 8 0l-2 8q-4 -3 -8 0z" fill="#f06a28" />
          <path d="M20 12q4 3 9 0l-2 8q-5 3 -9 0z" fill="#8cc63c" />
          <path d="M8 20q4 -3 8 0l-2 8q-4 -3 -8 0z" fill="#4aa4e8" />
          <path d="M18 21q4 3 8 0l-2 8q-5 3 -9 0z" fill="#ffcc2c" />
        </svg>
      </button>
      <nav class="apps">
        <button v-for="a in apps" :key="a.label" type="button" :class="{ active: a.active, stacked: a.stacked }" :aria-label="a.label">
          <svg width="36" height="36" viewBox="0 0 40 40" v-html="a.art"></svg>
        </button>
      </nav>
      <div class="tray">
        <svg class="kbd" width="16" height="16" viewBox="0 0 16 16"><path d="M0 7h16v8H0z" fill="#d8d8d4" /><path d="M2 9h12M2 11h12M4 13h8" stroke="#666" stroke-dasharray="1 1" /><path d="M5 7V4h5l3 -2" fill="none" stroke="#ccc" /></svg>
        <svg width="17" height="17" viewBox="0 0 17 17"><circle cx="8.500" cy="8.500" r="7.500" fill="#1c2fd0" stroke="#dde" /><text x="8.500" y="13" text-anchor="middle" font-size="12" font-weight="bold" fill="#fff" font-family="Liberation Sans, sans-serif">?</text></svg>
        <svg width="9" height="18" viewBox="0 0 9 18"><path d="M3.500 1.500h5v3h-5zM.5 3.500h5v3h-5z" fill="#0a2f5c" stroke="#fff" /><path d="M2 14h6l-3 3z" fill="#fff" /></svg>
        <svg class="more" width="9" height="6" viewBox="0 0 9 6"><path d="M0 5h9L4.500 0z" fill="#fff" /></svg>
        <svg width="15" height="16" viewBox="0 0 15 16"><path d="M1 1v14" stroke="#fff" stroke-width="1.500" /><path d="M2 1h5v1h6v7H7V8H2z" fill="#fff" /><circle cx="10" cy="11" r="4" fill="#d8201c" /><path d="M8 9l4 4M12 9l-4 4" stroke="#fff" stroke-width="1.500" /></svg>
        <svg width="15" height="16" viewBox="0 0 15 16"><path d="M0 5h3l4 -4v14l-4 -4H0z" fill="#fff" /><path d="M9 5q2 3 0 6M11 3q4 5 0 10" fill="none" stroke="#fff" /></svg>
        <svg width="16" height="16" viewBox="0 0 16 16"><path d="M5 4h10v8H5zM10 12v3M6 15h8" fill="none" stroke="#fff" stroke-width="1.500" /><path d="M0 1h5v5H0zM2.500 6v8h3" fill="none" stroke="#fff" stroke-width="1.500" /></svg>
        <time>16:20<br />2023/3/15</time>
        <button type="button" class="peek" aria-label="Show desktop"></button>
      </div>
    </footer>
  </div>
</template>

<style>
body { margin: 0; background: #0a2f5c; }
</style>

<style scoped>
.desktop { display: flex; flex-direction: column; min-height: 100vh; overflow: hidden; background: #0d3a78; color: #000; }
button { margin: 0; padding: 0; border: 0; background: none; color: inherit; font: inherit; cursor: pointer; }
svg { display: block; }
u { text-underline-offset: 3px; }

.window { position: relative; display: flex; flex-direction: column; flex: 1; box-sizing: border-box; margin-right: -7px; padding: 0 0 8px 6px; background: linear-gradient(90deg, #2b5c98, #0d3a78 8px, #0d3a78); border-left: 1px solid #9fb8d6; }
.titlebar { position: relative; display: flex; height: 20px; margin-left: -7px; background: linear-gradient(90deg, #6d87a8, #5b7698 400px, #0b3570 460px, #0d3c7c 55%, #082f66 80%, #2e5a92); }
.glow { position: absolute; left: 0; top: 0; }
.xico { position: relative; margin-left: 8px; }
.caption { position: relative; margin-left: 5px; font: 13px/14px "Open Sans", "Noto Sans", sans-serif; color: #14243c; text-shadow: 0 0 5px #b0bed0; white-space: nowrap; }
.winbtns { position: relative; display: flex; height: 12px; margin-left: auto; border: 1px solid #8fa8c6; border-top: 0; border-radius: 0 0 5px 5px; background: #1f4c86; }
.winbtns button { display: flex; align-items: center; justify-content: center; width: 28px; height: 12px; border-right: 1px solid #8fa8c6; }
.winbtns button:last-child { width: 44px; border: 0; }
.min { width: 10px; height: 3px; background: #fff; }
.max { width: 5px; height: 5px; border: 2px solid #fff; border-top-width: 1px; }

.body { display: flex; flex-direction: column; flex: 1; border: 1px solid #b7cde0; border-right: 0; border-left-color: #24485c; background: #000; }

.top { display: flex; height: 57px; }
.menubar { display: flex; flex: 1; align-items: center; gap: 18px; box-sizing: border-box; margin: 2px 3px 3px 1px; padding: 2px 13px 0; border: 2px solid; border-color: #d3f7f6 #5a8685 #5a8685 #d3f7f6; background: #9adada; box-shadow: 0 -2px #5a8685, 0 2px #d3f7f6, 2px 0 #d3f7f6; font: bold 14px/18px "Liberation Serif", serif; }
.help { margin-left: auto; }
.brand { display: flex; box-sizing: border-box; width: 412px; padding-left: 4px; border: 3px solid; border-color: #5a8685 #d3f7f6 #d3f7f6 #5a8685; border-right: 0; background: #9adada; }
.brand > svg { flex: none; margin-top: 8px; }
.product { flex: none; width: 136px; text-align: center; white-space: nowrap; }
.product b { display: block; font: bold 24px/30px "Liberation Serif", serif; }
.product em { display: block; font: italic bold 14px/20px "Liberation Serif", serif; }
.clock { margin-left: 7px; padding-top: 4px; font: italic bold 15px/16px "Liberation Mono", monospace; text-align: center; white-space: nowrap; }

.work { display: flex; flex: 1; min-height: 0; }
.side { display: flex; flex-direction: column; box-sizing: border-box; width: 155px; padding: 3px 2px 2px 2px; border-left: 1px solid #2e7a68; background: #52cdae; }
.jobinfo { border: 1px solid #000; background: #000; font: 15px/18px "Liberation Mono", monospace; white-space: nowrap; overflow: hidden; }
.jobinfo div { height: 18px; padding-left: 2px; background: #9adada; }
.jobinfo div + div { margin-top: 1px; }
.matrixbox { margin-top: 2px; padding: 2px; border: 1px solid #000; }
.matrixbox button { display: block; width: 100%; padding-left: 1px; border: 2px solid; border-color: #d3f7f6 #5a8685 #5a8685 #d3f7f6; background: #9adada; font: bold 15px/18px "Liberation Mono", monospace; text-align: left; white-space: nowrap; }
.layers { flex: 1; margin: 2px -2px 0; border: 3px solid; border-color: #2e7a68 #b4f3e2 #b4f3e2 #2e7a68; }
.layerframe { box-sizing: border-box; width: 123px; height: 424px; padding: 0 0 0 2px; border: 1px solid #000; box-shadow: 2px 1px #a0ecd6; }
.layerframe ul { width: 117px; margin: 0 0 3px; padding: 1px 0; list-style: none; background: #000; }
.layerframe li { display: flex; height: 16px; padding-left: 1px; align-items: center; }
.layerframe input { appearance: none; flex: none; width: 14px; height: 14px; margin: 0 18px 0 0; background: #fff; border: 2px solid #fff; outline: 0; box-shadow: inset 0 0 0 2px #000; }
.layerframe input.on { margin-right: 2px; border-color: #0000b8; }
.mark { flex: none; margin-right: 2px; }
.layerframe label { display: flex; align-items: center; justify-content: space-between; width: 79px; height: 14px; padding: 0 1px; font: bold 12px/14px "Liberation Mono", monospace; white-space: nowrap; overflow: hidden; }
.layerframe label svg { flex: none; }
label.white { background: #fff; }
label.green { background: #00a37c; }
label.orange { background: #ffc64e; }
label.slate { background: #9ab4be; }
label.silver { background: #dcdcdc; }
label.aqua { background: #9adada; }
.selected { padding: 2px 0 0; }
.selected div { height: 18px; padding-left: 2px; border: 1px solid #000; background: #ffc64e; font: bold 12px/18px "Liberation Mono", monospace; }

.canvas { position: relative; flex: 1; min-width: 0; overflow: hidden; background: #000; }
.canvas > svg { position: absolute; inset: 0; }
.ln { fill: none; stroke: #4f9124; }
.ln .bold { stroke-width: 2; }
.logo { fill: #4a9a10; }
.lam { font: 31px "Liberation Serif", serif; }
.res { font: 16px "Liberation Mono", monospace; }
.mtg { font: 9px "Liberation Mono", monospace; }
.pt { fill: #b480ee; stroke: none; font: 13px "Liberation Mono", monospace; }
.pt path { stroke: #b480ee; }
.copy { font-size: 20px; }
.cross { fill: none; stroke: #fff; }

.tools { display: flex; flex-direction: column; box-sizing: border-box; width: 163px; border-left: 2px solid #2e6f64; }
.grid { display: grid; grid-template-columns: repeat(4, 38px); gap: 2px; padding: 1px 0 2px 1px; border-top: 1px solid #2e7a68; border-bottom: 2px solid #b4f3e2; }
.grid.edit { padding-top: 2px; border-top: 1px solid #555; border-bottom: 2px solid #5f7f7a; }
.grid button { box-sizing: border-box; width: 38px; height: 38px; padding: 1px; border: 3px solid; }
.grid svg { outline: 1px solid #000; outline-offset: -1px; }
.grid .aqua { background: #9adada; border-color: #d3f7f6 #5a8685 #5a8685 #d3f7f6; }
.grid .red { background: #9adada; border-color: #f2d4d4 #8e1a1a #8e1a1a #f2d4d4; box-shadow: inset 0 0 0 1px #b82222; }
.grid .white { background: #fff; border-color: #e4e4e4 #8c8c8c #8c8c8c #c8c8c8; }
.grid .gray { background: #d4d4d4; border-color: #f4f4f4 #808080 #808080 #f4f4f4; }
.grid .orange { background: #ffc64e; border-color: #ffeab8 #8e6e28 #8e6e28 #ffeab8; }
.overview { display: flex; flex: 1; flex-direction: column; justify-content: center; min-height: 0; overflow: hidden; }
.xy { box-sizing: border-box; height: 43px; padding: 5px 0 0 3px; border-top: 2px solid #2e7a68; border-bottom: 2px solid #b4f3e2; box-shadow: 0 -2px #b4f3e2; background: #52cdae; font: 15px/15px "Liberation Mono", monospace; }

.command { display: flex; height: 32px; margin: 2px 0 1px; background: #ffffce; font: bold 12px/32px "Liberation Mono", monospace; }
.cb { display: flex; align-items: center; justify-content: center; box-sizing: border-box; width: 33px; border-right: 2px solid #000; box-shadow: inset 3px 3px #ffffce, inset -2px -3px #ffffce, inset 0 0 0 4px #b8b898; }
.cb.lit { width: 29px; border: 2px solid #52b89c; box-shadow: inset 1px 1px #fff, inset -2px -2px #b4b48e; background: #f2f0c0; }
.command label { width: 45px; padding-left: 3px; border-right: 1px solid #555; white-space: nowrap; }
.field { position: relative; box-sizing: border-box; width: 174px; padding: 3px 2px; border-right: 2px solid #2e7a68; }
.field input { display: block; box-sizing: border-box; width: 100%; height: 26px; padding: 0 4px; border: 2px solid; border-color: #9c9c7c #c8c8a0 #c8c8a0 #9c9c7c; background: #ffffce; font: inherit; }
.field i { position: absolute; left: 8px; top: 6px; height: 14px; border-left: 1px dotted #000; }
.prompt { flex: 1; padding-left: 1px; border-left: 2px solid #000; white-space: nowrap; }
.unit { display: flex; align-items: center; box-sizing: border-box; width: 79px; padding: 0 0 0 4px; border-left: 2px solid #000; background: #52cdae; }
.unit select { appearance: none; width: 49px; height: 28px; padding: 0 0 0 4px; border: 2px solid; border-color: #b4f3e2 transparent #2e7a68 #b4f3e2; border-radius: 0; background: none; color: #000; font: bold 15px/22px "Liberation Mono", monospace; }
.unit i { width: 8px; height: 4px; border: 2px solid; border-color: #b4f3e2 #2e7a68 #2e7a68 #b4f3e2; }
.statusframe { padding: 2px 0 2px 1px; border-top: 2px solid #7f9a98; background: #dff; }
.status { height: 18px; border: 2px solid; border-width: 3px 2px 3px 4px; border-color: #dffffc #5f9a98 #5f9a98 #dffffc; outline: 1px solid #000; background: #b3ffff; font: bold 12px/18px "Liberation Mono", monospace; text-align: center; white-space: nowrap; }

.popup { position: absolute; left: 146px; top: 129px; display: flex; flex-direction: column; box-sizing: border-box; width: 346px; padding: 0 6px 6px; border: 1px solid #c6ccd0; border-radius: 6px 6px 5px 5px; background: linear-gradient(90deg, rgba(82, 150, 160, .95), rgba(30, 36, 40, .9) 30%, rgba(20, 24, 28, .9)); box-shadow: 0 0 6px 3px rgba(0, 0, 0, .55); font: bold 12px/13px "Liberation Mono", monospace; }
.popup > header { display: flex; height: 27px; margin: 0 -6px; padding-left: 7px; align-items: center; border-radius: 6px 6px 0 0; background: linear-gradient(90deg, #90989a, #7c8284 45%, #151718 60%, #2e3234 75%, #6e7476); }
.popup > header span { margin-left: 6px; font: 13px/20px "Open Sans", "Noto Sans", sans-serif; color: #101418; text-shadow: 0 0 5px #b8bcc0; white-space: nowrap; }
.popup > header button { display: flex; align-items: center; justify-content: center; align-self: flex-start; width: 47px; height: 18px; margin: 0 4px 0 auto; border: 1px solid #e8c4bc; border-top: 0; border-radius: 0 0 4px 4px; background: linear-gradient(#dc9a8c, #c4503c 48%, #a82410 52%, #d0604a); }
.inner { display: flex; flex-direction: column; border: 1px solid #b4e8dc; background: #52cdae; }
.layerline { padding: 3px 3px; }
.layerline div { height: 17px; padding-left: 1px; border: 2px solid #000; background: #439600; line-height: 17px; }
.inner nav { display: flex; gap: 15px; height: 22px; padding-left: 11px; border: 2px solid; border-color: #d3f7f6 #5a8685 #5a8685 #d3f7f6; outline: 1px solid #000; background: #9adada; }
.scroller { display: grid; grid-template-columns: 306px 13px; grid-template-rows: 544px 14px; column-gap: 4px; row-gap: 4px; margin-top: 5px; padding: 1px 0 1px 1px; border: 2px solid; border-color: #2e7a68 #2e7a68 #b4f3e2 #2e7a68; box-shadow: inset 0 -1px #000; }
.listing { box-sizing: border-box; padding: 3px 0 0 3px; border: 2px solid #f0fffb; border-right: 3px solid #c8fff0; box-shadow: inset 2px 2px #2e7a68; overflow: hidden; }
table { table-layout: fixed; width: 296px; border-collapse: collapse; }
.c1 { width: 60px; }
.c2 { width: 168px; }
td { height: 13px; padding: 0; line-height: 13px; white-space: nowrap; }
td:first-child { padding-left: 4px; }
td span { display: inline-block; min-width: 56px; height: 13px; padding-left: 7px; vertical-align: top; }
.picked { background: #000; color: #7fe8cc; }
.vbar, .hbar { display: flex; background: #36a68c; border: 1px solid; border-color: #2e7a68 #b4f3e2 #b4f3e2 #2e7a68; }
.vbar { flex-direction: column; }
.vbar i { flex: 1; margin-top: 67px; border: 2px solid; border-color: #b4f3e2 #2e7a68 #2e7a68 #b4f3e2; background: #52cdae; }
.hbar i { flex: 1; border: 2px solid; border-color: #b4f3e2 #2e7a68 #2e7a68 #b4f3e2; background: #52cdae; }
.actions { display: grid; grid-template-columns: 108px 108px 1fr; grid-auto-rows: 26px; gap: 1px; background: #000; border: 1px solid #000; }
.actions div { display: flex; padding: 2px; background: #52b89c; }
.actions button { flex: 1; border: 2px solid; border-color: #d3f7f6 #4e7c7c #4e7c7c #d3f7f6; background: #9adada; }
.actions .gold { border-color: #ffeaa8 #7e6424 #7e6424 #ffeaa8; background: #ffc64e; }
.actions .plain { border-color: #cfcfcf #8c8c8c #8c8c8c #cfcfcf; background: #fff; }
.tall { grid-row: span 2; }
.wide { grid-column: span 3; }

.taskbar { display: flex; box-sizing: border-box; height: 39px; border-top: 1px solid #8c9cb0; background: linear-gradient(90deg, #0c2444, #0c376a 30%, #082c58 55%, #15406c 70%, #0a2c54 85%, #102a48); }
.start { width: 54px; padding-left: 8px; }
.apps { display: flex; gap: 4px; margin-left: 6px; }
.apps button { display: flex; justify-content: center; align-items: center; box-sizing: border-box; width: 58px; height: 37px; border: 1px solid #9aaec8; border-radius: 3px; background: linear-gradient(160deg, #9aacc4, #4a688e 45%, #23466e); }
.apps .active { background: linear-gradient(160deg, #d4dce6, #9aa8bc 50%, #8494ac); }
.apps .stacked { width: 50px; margin-right: 8px; box-shadow: 2px 0 #23466e, 3px 0 #9aaec8, 6px 0 #23466e, 7px 0 #9aaec8; }
.tray { display: flex; align-items: center; gap: 10px; margin-left: auto; padding-right: 1px; }
.kbd { margin-right: -3px; }
.more { margin-right: 4px; }
.tray time { width: 72px; font: 12px/18px "Open Sans", "Noto Sans", sans-serif; color: #fff; text-align: center; }
.peek { box-sizing: border-box; width: 13px; height: 37px; margin-left: -8px; border: 1px solid #7888a0; background: linear-gradient(#8898ac, #2c4460 50%, #1c3450); }
</style>
